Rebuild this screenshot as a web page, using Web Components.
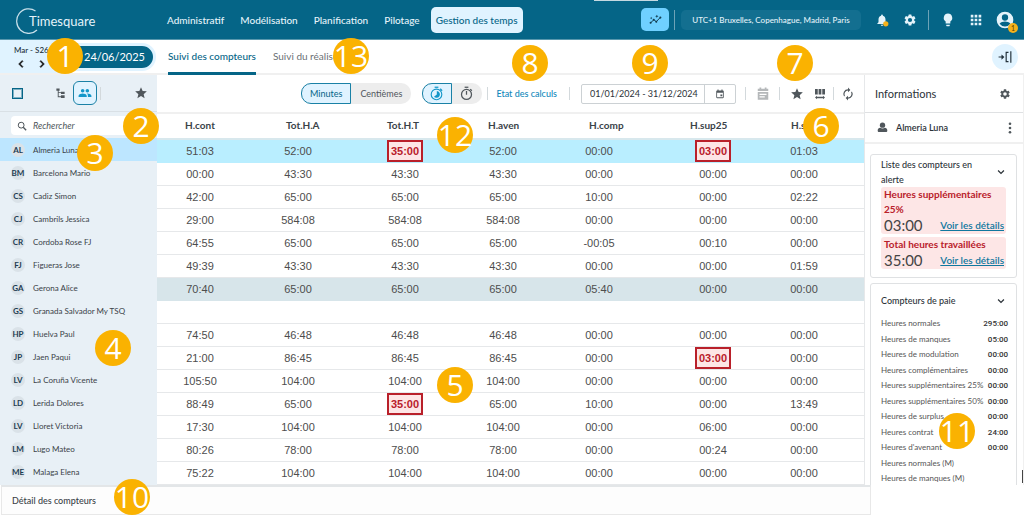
<!DOCTYPE html>
<html lang="fr">
<head>
<meta charset="utf-8">
<title>Timesquare</title>
<style>
  html, body { margin: 0; background: #fff; }
  body { font: 10px/16px Lato, "Open Sans", sans-serif; color: #3a4248; overflow-x: hidden; }
</style>
</head>
<body>
<ts-app></ts-app>
<script>
const base = `*{box-sizing:border-box} button,input{font:inherit;color:inherit;margin:0;padding:0;border:0;background:none} button{cursor:pointer} a{color:inherit;text-decoration:none}`;
function define(name, html, setup) {
  const t = document.createElement('template');
  t.innerHTML = html.replace('<style>', '<style>' + base);
  customElements.define(name, class extends HTMLElement {
    constructor() {
      super();
      this.attachShadow({ mode: 'open' }).append(t.content.cloneNode(true));
    }
    connectedCallback() { if (setup) setup(this.shadowRoot, this); }
  });
}

const icons = {
  prev: '<path d="M15.4 7.4 14 6l-6 6 6 6 1.4-1.4L10.8 12z" stroke="currentColor"/>',
  next: '<path d="M8.6 16.6 10 18l6-6-6-6-1.4 1.4 4.6 4.6z" stroke="currentColor"/>',
  down: '<path d="m5 8.500 7 7 7-7" fill="none" stroke="currentColor" stroke-width="3"/>',
  star: '<path d="M12 17.3 18.2 21l-1.6-7L22 9.2l-7.2-.6L12 2 9.2 8.6 2 9.2 7.5 14l-1.7 7z"/>',
  people: '<path d="M16 11c1.700 0 3-1.300 3-3s-1.300-3-3-3-3 1.300-3 3 1.300 3 3 3zM8 11c1.700 0 3-1.300 3-3S9.700 5 8 5 5 6.300 5 8s1.300 3 3 3zm0 2c-2.300 0-7 1.200-7 3.500V19h14v-2.500C15 14.200 10.300 13 8 13zm8 0h-1c1.200.8 2 2 2 3.500V19h6v-2.500c0-2.300-4.700-3.500-7-3.500z"/>',
  tree: '<path d="M3 1h7v5H8v3h5V8h8v5h-8v-2H8v7h5v-2h8v6h-8v-2H6V6H3z"/>',
  search: '<circle cx="10" cy="10" r="7" fill="none" stroke="currentColor" stroke-width="2.4"/><path d="m15 15 7 7" stroke="currentColor" stroke-width="3.200"/>',
  bell: '<path d="M12 22a2 2 0 0 0 2-2h-4a2 2 0 0 0 2 2zm6-6v-5c0-3.100-1.600-5.600-4.500-6.300V4a1.500 1.500 0 0 0-3 0v.7C7.600 5.400 6 7.900 6 11v5l-2 2v1h16v-1z"/><circle cx="18.500" cy="18.500" r="4.500" fill="#f5b21c"/>',
  gear: '<path d="M19.140 12.940c.04-.3.060-.610.060-.940s-.02-.640-.070-.940l2.030-1.580a.49.49 0 0 0 .12-.610l-1.920-3.320a.49.49 0 0 0-.590-.220l-2.390.960a7 7 0 0 0-1.620-.940l-.360-2.540a.48.48 0 0 0-.480-.410h-3.840a.48.48 0 0 0-.470.410l-.360 2.540a7.200 7.200 0 0 0-1.620.940l-2.390-.960a.48.48 0 0 0-.590.220L2.740 8.870a.48.48 0 0 0 .12.610l2.030 1.580a6 6 0 0 0 0 1.880l-2.030 1.580a.49.49 0 0 0-.12.610l1.920 3.320c.12.220.370.290.590.220l2.390-.960c.5.380 1.030.7 1.620.940l.360 2.540c.05.240.24.410.480.410h3.840c.24 0 .44-.170.470-.410l.360-2.540a7 7 0 0 0 1.620-.940l2.390.960c.22.080.470 0 .590-.220l1.920-3.320a.48.48 0 0 0-.12-.610zM12 15.600a3.600 3.600 0 1 1 0-7.200 3.600 3.600 0 0 1 0 7.200z"/>',
  bulb: '<path d="M9 20h6v1a1 1 0 0 1-1 1.500h-4A1 1 0 0 1 9 21zM12 1a7.500 7.500 0 0 0-4 13.700V18h8v-3.300A7.500 7.500 0 0 0 12 1z"/>',
  apps: '<path d="M3 3h4.500v4.500H3zm6.700 0h4.500v4.500H9.700zm6.800 0H21v4.500h-4.500zM3 9.700h4.500v4.500H3zm6.700 0h4.500v4.500H9.700zm6.800 0H21v4.500h-4.500zM3 16.500h4.500V21H3zm6.700 0h4.500V21H9.700zm6.800 0H21V21h-4.500z"/>',
  account: '<path d="M12 2a10 10 0 1 0 0 20 10 10 0 0 0 0-20zm0 3.200a3.800 3.800 0 1 1 0 7.600 3.800 3.800 0 0 1 0-7.600zm0 14.500a8 8 0 0 1-6.500-3.300c1-1.700 4.500-2.600 6.500-2.600s5.500.9 6.500 2.600a8 8 0 0 1-6.500 3.300z"/>',
  trend: '<path d="m3 18 6-5.500 4.500 3.500 7.500-8" fill="none" stroke="currentColor" stroke-width="1.800"/><circle cx="3" cy="18" r="1.900"/><circle cx="8.700" cy="12.500" r="1.900"/><circle cx="13.500" cy="16" r="1.900"/><circle cx="21" cy="8.500" r="1.900"/><path d="m14.500 3 .9 2.300 2.300.9-2.300.9-.9 2.300-.9-2.300-2.300-.9 2.300-.9zM4 7l.7 1.600 1.600.7-1.600.7L4 11.600 3.300 10l-1.600-.7 1.600-.7z"/>',
  timer: '<path d="M9 1h6v2H9z"/><circle cx="12" cy="13.500" r="8" fill="none" stroke="currentColor" stroke-width="2"/><path d="M11 8h2v6h-2z"/><path d="m18 5 2.500 2.500" stroke="currentColor" stroke-width="2"/>',
  timerFull: '<path d="M9 1h6v2H9z"/><circle cx="12" cy="13.500" r="8.500" fill="none" stroke="currentColor" stroke-width="1.800"/><path d="M12.500 8a5.500 5.500 0 1 1-4.500 9.300l4.500-3.800z"/><path d="m18 4.500 3 3" stroke="currentColor" stroke-width="2"/>',
  event: '<path d="M19 3.500h-1V1h-2.500v2.500h-7V1H6v2.500H5a2 2 0 0 0-2 2V20a2 2 0 0 0 2 2h14a2 2 0 0 0 2-2V5.500a2 2 0 0 0-2-2zM19 20H5V9h14zm-6-7h4.500v4.500H13z"/>',
  calendar: '<path d="M3 3h3V1h3v2h6V1h3v2h3v4H3zM3 8.500h18V22H3zm3 3v2h12v-2zm0 4.500v2h9v-2z" fill-rule="evenodd"/>',
  columns: '<path d="M2 2h5.500v11H2zm7.200 0h5.500v11H9.200zm7.300 0H22v11h-5.500zM6 15.500v2h12v-2l4 3.500-4 3.500v-2H6v2L2 19z"/>',
  refresh: '<path d="M12 6v3l4-4-4-4v3a8 8 0 0 0-6.800 12.300l1.500-1.500A6 6 0 0 1 12 6zm6.800 1.700-1.500 1.500A6 6 0 0 1 12 18v-3l-4 4 4 4v-3a8 8 0 0 0 6.800-12.300z"/>',
  user: '<circle cx="12" cy="7" r="5.800"/><path d="M7 12.500c1.500 1.200 3 1.700 5 1.700s3.500-.5 5-1.700c3 0 5.500 2 5.500 6 0 2.500-1 3.500-3 3.500h-15c-2 0-3-1-3-3.500 0-4 2.500-6 5.500-6z"/>',
  more: '<circle cx="12" cy="3.500" r="2.600"/><circle cx="12" cy="12" r="2.600"/><circle cx="12" cy="20.500" r="2.600"/>',
  collapse: '<path d="M1 11h5V7.500l5 4.500-5 4.500V13H1zM21 2h2v20h-2z"/><path d="M18 4h-4v16h4" fill="none" stroke="currentColor" stroke-width="2"/>'
};
define('ts-icon', `<style>:host{display:inline-flex;flex:none;width:var(--size,14px);height:var(--size,14px)} svg{width:100%;height:100%;display:block}</style><svg viewBox="0 0 24 24" fill="currentColor" aria-hidden="true"></svg>`,
  (r, el) => { r.querySelector('svg').innerHTML = icons[el.getAttribute('name')]; });

define('ts-rule', `<style>:host{display:block;flex:none;width:1px;height:13px;background:#d3d9dc}</style>`);

/* numbered marker laid over the screen */
define('ts-pin', `<style>:host{position:absolute;left:calc(var(--x)*1px - 18px);top:calc(var(--y)*1px - 18px);width:36px;height:36px;border-radius:50%;background:#fab201;color:#fff;font:30px/36px "Open Sans","Noto Sans",sans-serif;display:flex;justify-content:center;z-index:5}</style><slot></slot>`);

define('ts-topbar', `<style>
:host{display:flex;align-items:center;height:40px;background:#056587;color:#e4f3fa;border-bottom:1px solid #5797ad;padding:0 9px 0 15px;position:relative}
.logo{width:82px;height:28px;flex:none;margin-right:65px}
nav{display:flex;gap:6px}
nav a{padding:5px;white-space:nowrap;border-radius:5px;font-weight:500}
nav a.on{background:#e0f3ff;color:#056587}
.right{display:flex;align-items:center;margin-left:auto}
.trend{width:28px;height:23px;border-radius:5px;background:#6fd0ff;color:#123d50;display:flex;align-items:center;justify-content:center;margin-right:5px}
.right ts-rule{height:20px;background:#6da3b7}
.tz{margin:0 14px 0 6px;height:20px;width:180px;border-radius:5px;background:#136f90;font-size:8px;font-weight:500;text-align:center;white-space:nowrap}
.ib{display:flex;position:relative}
.count{position:absolute;right:-3px;bottom:-3px;width:10px;height:10px;border-radius:50%;background:#f5b21c;color:#5b4200;font-size:7px;line-height:10px;text-align:center}
.tab{position:absolute;left:58%;top:0;width:64px;height:1px;background:#c5d9e1}
</style>
<svg class="logo" viewBox="0 0 82 28" role="img" aria-label="Timesquare"><path d="M20.500 5A12 12.300 0 1 0 22 24" fill="none" stroke="#c9e0ea" stroke-width="1.200"/><text x="14" y="20" font-family="Lato" font-size="13" fill="#e4f3fa">Timesquare</text></svg>
<nav><a href="#">Administratif</a><a href="#">Modélisation</a><a href="#">Planification</a><a href="#">Pilotage</a><a href="#" class="on">Gestion des temps</a></nav>
<div class="right">
<button class="trend" aria-label="Tendances"><ts-icon name="trend" style="--size:13px"></ts-icon></button><ts-rule></ts-rule>
<button class="tz">UTC+1 Bruxelles, Copenhague, Madrid, Paris</button>
<button class="ib" aria-label="Notifications"><ts-icon name="bell"></ts-icon></button>
<button class="ib" aria-label="Paramètres" style="margin:0 11px 0 14px"><ts-icon name="gear"></ts-icon></button><ts-rule></ts-rule>
<button class="ib" aria-label="Aide" style="margin:0 14px 0 12px"><ts-icon name="bulb"></ts-icon></button>
<button class="ib" aria-label="Applications" style="margin-right:12px"><ts-icon name="apps"></ts-icon></button>
<button class="ib" aria-label="Compte"><ts-icon name="account" style="--size:20px"></ts-icon><span class="count">1</span></button>
</div><span class="tab"></span>`);

define('ts-subnav', `<style>
:host{display:flex;align-items:stretch;height:35px;border-bottom:2px solid #f0f0f0;padding-right:6px}
.date{width:157px;flex:none;display:flex;align-items:center;margin-right:11px}
.week{width:60px;height:100%;background:#e0f3ff;padding:3px 0 0 14px;font-size:8px;font-weight:500;line-height:14px;color:#22303a;white-space:nowrap}
.week div{display:flex;gap:7px;color:#111}
.week button{display:flex}
.day{height:28px;margin-left:-8px;width:104px;border:3px solid #e0f3ff;border-radius:14px;background:#056587;color:#fff;font-size:11px;text-align:right;padding-right:8px}
nav{display:flex;gap:17px}
nav a{padding-top:8px;white-space:nowrap;color:#6a7075}
nav a.on{color:#056587;border-bottom:3px solid #056587;margin-bottom:-2px;font-weight:500;border-radius:2px 2px 0 0}
.fold{margin:4px 0 0 auto;width:26px;height:26px;border-radius:50%;background:#e0f3ff;color:#22303a;display:flex;align-items:center;justify-content:center}
</style>
<div class="date"><div class="week">Mar - S26<div><button aria-label="Précédent"><ts-icon name="prev"></ts-icon></button><button aria-label="Suivant"><ts-icon name="next"></ts-icon></button></div></div><button class="day">24/06/2025</button></div>
<nav><a href="#" class="on">Suivi des compteurs</a><a href="#">Suivi du réalisé</a></nav>
<button class="fold" aria-label="Replier"><ts-icon name="collapse"></ts-icon></button>`);

const people = ['AL|Almeria Luna','BM|Barcelona Mario','CS|Cadiz Simon','CJ|Cambrils Jessica','CR|Cordoba Rose FJ','FJ|Figueras Jose','GA|Gerona Alice','GS|Granada Salvador My TSQ','HP|Huelva Paul','JP|Jaen Paqui','LV|La Coruña Vicente','LD|Lerida Dolores','LV|Lloret Victoria','LM|Lugo Mateo','ME|Malaga Elena'];
define('ts-people', `<style>
:host{display:block;background:#e8f0f6}
.bar{height:37px;display:flex;align-items:center;padding:0 9px 0 12px;border-bottom:1px solid #d9e0e5;color:#50575c}
input[type=checkbox]{appearance:none;width:11px;height:11px;border:1px solid #056587;outline:1px solid #7fb0c3;outline-offset:-2px;margin-right:32px}
.grp{width:24px;height:24px;border:1px solid #1a81a6;border-radius:6px;background:#e0f3ff;color:#1497c9;display:flex;align-items:center;justify-content:center;margin:0 3px 0 7px}
.bar .st{margin-left:auto;display:flex}
.tree{display:flex}
.find{height:19px;margin:4px 8px 3px 11px;background:#fff;border-radius:4px;display:flex;align-items:center;gap:6px;padding-left:6px;color:#50575c}
.find input{flex:1;min-width:0;font-size:9px;font-style:italic;outline:0}
.find input::placeholder{color:#50575c}
ul{list-style:none;margin:0;padding:0}
li{height:23px;display:flex;align-items:center;gap:8px;padding-left:11px;font-size:8px;line-height:16px;white-space:nowrap}
li.on{background:#bde6ff}
b{width:14px;height:14px;border-radius:50%;background:#dae2e8;color:#1d3c52;line-height:14px;display:flex;justify-content:center}
</style>
<div class="bar"><input type="checkbox" aria-label="Tout sélectionner"><button class="tree" aria-label="Arborescence"><ts-icon name="tree" style="--size:11px"></ts-icon></button><button class="grp" aria-label="Groupes"><ts-icon name="people"></ts-icon></button><ts-rule></ts-rule><button class="st" aria-label="Favoris"><ts-icon name="star"></ts-icon></button></div>
<label class="find"><ts-icon name="search" style="--size:10px"></ts-icon><input placeholder="Rechercher" aria-label="Rechercher"></label>
<ul></ul>`, r => {
  r.querySelector('ul').innerHTML = people.map((p, i) => { const [a, n] = p.split('|'); return `<li class="${i ? '' : 'on'}"><b>${a}</b><span>${n}</span></li>`; }).join('');
});

define('ts-toolbar', `<style>
:host{display:flex;align-items:center;justify-content:flex-end;height:37px;padding-right:9px;color:#50575c;font-size:9px}
.seg{display:flex;border-radius:10px;background:#ededed;height:21px}
.seg button{padding:0 9px;display:flex;align-items:center}
.seg button.on{background:#e0f3ff;border:1px solid #1a81a6;border-radius:10px 0 0 10px;color:#056587;padding:0 8px}
.seg.ic button{padding:0 8px 0 7px}.seg.ic button.on{padding:0 7px 0 6px;color:#1497c9}
.seg.ic{margin:0 5px 0 11px}
a{color:#1188bb;font-weight:500;margin:0 12px 0 8px;white-space:nowrap}
.range{display:flex;height:20px;width:155px;border:1px solid #ccd1d4;border-radius:2px;margin:0 9px 0 11px}
.range input{flex:1;min-width:0;padding-left:8px;color:#2b3238}
.range button{width:31px;border-left:1px solid #ccd1d4;display:flex;align-items:center;justify-content:center}
.i{display:flex;margin:0 0 0 10px}
</style>
<div class="seg"><button class="on">Minutes</button><button>Centièmes</button></div>
<div class="seg ic"><button class="on" aria-label="Chronomètre réel"><ts-icon name="timerFull" style="--size:15px"></ts-icon></button><button aria-label="Chronomètre"><ts-icon name="timer" style="--size:15px"></ts-icon></button></div>
<ts-rule></ts-rule><a href="#">Etat des calculs</a><ts-rule></ts-rule>
<div class="range"><input value="01/01/2024 - 31/12/2024" aria-label="Période"><button aria-label="Calendrier"><ts-icon name="event" style="--size:10px"></ts-icon></button></div>
<ts-rule></ts-rule><button class="i" style="color:#b5b8ba;margin-right:9px" aria-label="Planning"><ts-icon name="calendar"></ts-icon></button><ts-rule></ts-rule>
<button class="i" aria-label="Favoris"><ts-icon name="star"></ts-icon></button><button class="i" style="margin-right:7px" aria-label="Colonnes"><ts-icon name="columns" style="--size:12px"></ts-icon></button><ts-rule></ts-rule>
<button class="i" style="margin-left:7px" aria-label="Actualiser"><ts-icon name="refresh"></ts-icon></button>`);

const rows = `51:03 52:00 !35:00 52:00 00:00 !03:00 01:03
00:00 43:30 43:30 43:30 00:00 00:00 00:00
42:00 65:00 65:00 65:00 10:00 00:00 02:22
29:00 584:08 584:08 584:08 00:00 00:00 00:00
64:55 65:00 65:00 65:00 -00:05 00:10 00:00
49:39 43:30 43:30 43:30 00:00 00:00 01:59
70:40 65:00 65:00 65:00 05:40 00:00 00:00
 
74:50 46:48 46:48 46:48 00:00 00:00 00:00
21:00 86:45 86:45 86:45 00:00 !03:00 00:00
105:50 104:00 104:00 104:00 00:00 00:00 00:00
88:49 65:00 !35:00 65:00 10:00 00:00 13:49
17:30 104:00 104:00 104:00 00:00 06:00 00:00
80:26 78:00 78:00 78:00 00:00 00:24 00:00
75:22 104:00 104:00 104:00 00:00 00:00 00:00`.split('\n').map(l => l.trim() ? l.trim().split(' ') : Array(7).fill(''));
define('ts-grid', `<style>
:host{display:block}
table{width:100%;border-collapse:separate;border-spacing:0;table-layout:fixed}
th{height:28px;padding:0 0 2px 28px;text-align:left;font-size:10px;font-weight:700;line-height:16px;border-top:2px solid #f0f0f0;border-bottom:2px solid #d8e8ed}
td{height:23px;padding:0 0 0 13px;border-bottom:1px solid #e6e8ea;font:11px/16px "Liberation Sans",Arial,sans-serif;color:#4d4d4d}
td:nth-child(2){padding-left:10px}td:nth-child(3){padding-left:16px}td:nth-child(5){padding-left:8px}td:nth-child(6){padding-left:21px}td:nth-child(7){padding-left:11px}
span{display:flex;width:60px;height:22px;align-items:center;justify-content:center}
i{font-style:normal;font-weight:700;color:#b9202a;border:2px solid #b9202a;background:#fde6e6;width:36px;line-height:18px;text-align:center}
tr.sel td{background:#b9eeff;border-color:#b9eeff}
tr.mark td{background:#d7e5ea;border-color:#d7e5ea}
tr.none td{border-color:#e6e8ea}
</style><table><thead><tr><th>H.cont<th>Tot.H.A<th>Tot.H.T<th>H.aven<th>H.comp<th>H.sup25<th>H.sup50</tr></thead><tbody></tbody></table>`, r => {
  r.querySelector('tbody').innerHTML = rows.map((c, i) => `<tr class="${i === 0 ? 'sel' : i === 6 ? 'mark' : ''}">${c.map(v => `<td><span>${v[0] === '!' ? `<i>${v.slice(1)}</i>` : v}</span></td>`).join('')}</tr>`).join('');
});

define('ts-card', `<style>
:host{display:block;border:1px solid #dfe1e3;border-radius:3px;margin:0 6px 5px 5px;padding:2px 10px 5px}
header{display:flex;align-items:center;justify-content:space-between;font-size:9px;font-weight:500;line-height:15px}
button{display:flex}
</style><header><slot name="title"></slot><button aria-label="Déplier"><ts-icon name="down" style="--size:10px"></ts-icon></button></header><slot></slot>`);

const pay = 'Heures normales|295:00,Heures de manques|05:00,Heures de modulation|00:00,Heures complémentaires|00:00,Heures supplémentaires 25%|00:00,Heures supplémentaires 50%|00:00,Heures de surplus|00:00,Heures contrat|24:00,Heures d\'avenant|00:00,Heures normales (M)|,Heures de manques (M)|'.split(',');
define('ts-info', `<style>
:host{display:block;position:relative;height:0;min-height:100%;overflow:hidden;border-left:1px solid #e6e8ea;border-right:1px solid #f0f0f0;color:#2b3238}
:host::after{content:"";position:absolute;right:0;bottom:2px;width:1px;height:13px;background:#444}
.h{height:38px;display:flex;align-items:center;justify-content:space-between;padding:0 12px 0 10px;border-bottom:1px solid #dfe1e3}
.u{height:31px;display:flex;align-items:center;padding:0 7px 0 12px;border-bottom:2px solid #f0f0f0;margin-bottom:10px;font-size:9px;font-weight:600}
.u button{margin-left:auto;display:flex}
.u span{margin-left:8px}
h2{font:inherit;margin:0} .h button{display:flex} .h h2{font-size:11px}
ts-icon{color:#50575c}
.al{background:#fde6e6;border-radius:3px;margin-bottom:3px;padding:0 2px 0 3px;color:#b9202a;font-weight:700;line-height:15px}
.al div{display:flex;justify-content:space-between;align-items:center;line-height:17px;color:#444;font-weight:400;font-size:15px}
.al a{color:#10789f;text-decoration:underline;font-size:10px;font-weight:600}
.p h2{line-height:30px}
table{width:100%;border-spacing:0;font-size:8px;line-height:15px;color:#555}
td{padding:0;height:15px;white-space:nowrap}
tr:nth-child(even) td{height:16px}
td+td{text-align:right;font:500 8px/15px Roboto,sans-serif;color:#333}
</style>
<div class="h"><h2>Informations</h2><button aria-label="Réglages"><ts-icon name="gear" style="--size:12px"></ts-icon></button></div>
<div class="u"><ts-icon name="user" style="--size:11px"></ts-icon><span>Almeria Luna</span><button aria-label="Plus"><ts-icon name="more" style="--size:12px"></ts-icon></button></div>
<ts-card><h2 slot="title">Liste des compteurs en<br>alerte</h2>
<div class="al">Heures supplémentaires 25%<div>03:00 <a href="#">Voir les détails</a></div></div>
<div class="al">Total heures travaillées<div>35:00 <a href="#">Voir les détails</a></div></div></ts-card>
<ts-card class="p"><h2 slot="title">Compteurs de paie</h2><table></table></ts-card>`, r => {
  r.querySelector('table').innerHTML = '<tbody>' + pay.map(p => { const [a, b] = p.split('|'); return `<tr><td>${a}</td><td>${b}</td></tr>`; }).join('') + '</tbody>';
});

define('ts-app', `<style>
:host{display:block;position:relative}
main{display:grid;grid-template-columns:157px minmax(0,1fr) 160px}
footer{display:flex;align-items:center;height:30px;margin:0 153px 0 1px;padding-left:10px;border:1px solid #e8e8e8;border-top:2px solid #e3e6e8;font-size:9px;font-weight:500;background:#fdfdfd}
</style>
<ts-topbar></ts-topbar><ts-subnav></ts-subnav>
<main><ts-people></ts-people><section><ts-toolbar></ts-toolbar><ts-grid></ts-grid></section><ts-info></ts-info></main>
<footer>Détail des compteurs</footer><div id="pins"></div>`, r => {
  const at = [[65,56],[141,126],[95,153],[113,348],[455,385],[821,126],[795,63],[530,63],[650,63],[132,497],[957,431],[455,135],[351,56]];
  r.querySelector('#pins').innerHTML = at.map(([x, y], i) => `<ts-pin style="--x:${x};--y:${y}">${i + 1}</ts-pin>`).join('');
});
</script>
</body>
</html>
